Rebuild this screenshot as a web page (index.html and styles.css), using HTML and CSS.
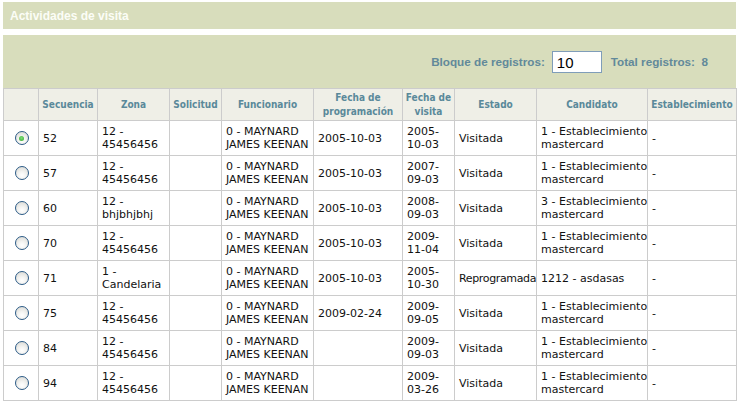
FILE: index.html
```html
<!DOCTYPE html>
<html>
<head>
<meta charset="utf-8">
<link rel="stylesheet" href="styles.css">
</head>
<body>
<div class="page">
  <div class="titlebar">Actividades de visita</div>
  <div class="toolbar">
    <label class="lbl">Bloque de registros:</label>
    <input class="block-input" type="text" value="10">
    <span class="lbl total">Total registros:&nbsp; 8</span>
  </div>
  <table class="grid">
    <colgroup>
      <col style="width:35px"><col style="width:59px"><col style="width:72px"><col style="width:52px"><col style="width:92px"><col style="width:89px"><col style="width:52px"><col style="width:82px"><col style="width:111px"><col style="width:89px">
    </colgroup>
    <thead>
      <tr>
        <th></th><th>Secuencia</th><th>Zona</th><th>Solicitud</th><th>Funcionario</th><th>Fecha de<br>programación</th><th>Fecha de<br>visita</th><th>Estado</th><th>Candidato</th><th>Establecimiento</th>
      </tr>
    </thead>
    <tbody>
      <tr><td class="sel"><span class="radio on"></span></td><td>52</td><td>12 -<br>45456456</td><td></td><td>0 - MAYNARD<br>JAMES KEENAN</td><td>2005-10-03</td><td>2005-<br>10-03</td><td>Visitada</td><td>1 - Establecimiento<br>mastercard</td><td>-</td></tr>
      <tr><td class="sel"><span class="radio"></span></td><td>57</td><td>12 -<br>45456456</td><td></td><td>0 - MAYNARD<br>JAMES KEENAN</td><td>2005-10-03</td><td>2007-<br>09-03</td><td>Visitada</td><td>1 - Establecimiento<br>mastercard</td><td>-</td></tr>
      <tr><td class="sel"><span class="radio"></span></td><td>60</td><td>12 -<br>bhjbhjbhj</td><td></td><td>0 - MAYNARD<br>JAMES KEENAN</td><td>2005-10-03</td><td>2008-<br>09-03</td><td>Visitada</td><td>3 - Establecimiento<br>mastercard</td><td>-</td></tr>
      <tr><td class="sel"><span class="radio"></span></td><td>70</td><td>12 -<br>45456456</td><td></td><td>0 - MAYNARD<br>JAMES KEENAN</td><td>2005-10-03</td><td>2009-<br>11-04</td><td>Visitada</td><td>1 - Establecimiento<br>mastercard</td><td>-</td></tr>
      <tr><td class="sel"><span class="radio"></span></td><td>71</td><td>1 -<br>Candelaria</td><td></td><td>0 - MAYNARD<br>JAMES KEENAN</td><td>2005-10-03</td><td>2005-<br>10-30</td><td class="tight">Reprogramada</td><td>1212 - asdasas</td><td>-</td></tr>
      <tr><td class="sel"><span class="radio"></span></td><td>75</td><td>12 -<br>45456456</td><td></td><td>0 - MAYNARD<br>JAMES KEENAN</td><td>2009-02-24</td><td>2009-<br>09-05</td><td>Visitada</td><td>1 - Establecimiento<br>mastercard</td><td>-</td></tr>
      <tr><td class="sel"><span class="radio"></span></td><td>84</td><td>12 -<br>45456456</td><td></td><td>0 - MAYNARD<br>JAMES KEENAN</td><td></td><td>2009-<br>09-03</td><td>Visitada</td><td>1 - Establecimiento<br>mastercard</td><td>-</td></tr>
      <tr><td class="sel"><span class="radio"></span></td><td>94</td><td>12 -<br>45456456</td><td></td><td>0 - MAYNARD<br>JAMES KEENAN</td><td></td><td>2009-<br>03-26</td><td>Visitada</td><td>1 - Establecimiento<br>mastercard</td><td>-</td></tr>
    </tbody>
  </table>
</div>
</body>
</html>
```

FILE: styles.css
```css
html, body {
  margin: 0;
  padding: 0;
  background: #ffffff;
}
.page {
  padding: 2px 0 0 3px;
  width: 733px;
}
.titlebar {
  height: 27px;
  background: #d8ddbc;
  color: #fcfdf7;
  font-family: "Liberation Sans", Arial, sans-serif;
  font-weight: bold;
  font-size: 12px;
  line-height: 28px;
  padding-left: 7px;
}
.toolbar {
  margin-top: 6px;
  height: 53px;
  background: #d8ddbc;
  display: flex;
  align-items: center;
  justify-content: flex-end;
  padding-right: 28px;
  font-family: "Liberation Sans", Arial, sans-serif;
  font-weight: bold;
  font-size: 11.7px;
  color: #62899a;
}
.block-input {
  box-sizing: border-box;
  width: 50px;
  height: 22px;
  margin: 0 0 0 7px;
  border: 1px solid #7f9db9;
  padding: 1px 4px 0;
  font-family: "Liberation Sans", Arial, sans-serif;
  font-size: 15px;
  color: #000;
  background: #fff;
  outline: none;
}
.total {
  margin-left: 9px;
}
.grid {
  border-collapse: collapse;
  table-layout: fixed;
  width: 733px;
  font-family: "DejaVu Sans", Verdana, sans-serif;
  font-size: 11px;
  color: #111;
}
.grid th, .grid td {
  border: 1px solid #cccccc;
}
.grid th {
  background: #efefe7;
  color: #5a899a;
  font-family: "DejaVu Sans Condensed", "DejaVu Sans", Tahoma, sans-serif;
  font-weight: bold;
  font-size: 10px;
  line-height: 14px;
  height: 31px;
  padding: 0 1px;
  text-align: center;
  vertical-align: middle;
  white-space: nowrap;
}
.grid td {
  height: 34px;
  line-height: 13px;
  padding: 0 1px 0 4px;
  vertical-align: middle;
  text-align: left;
  white-space: nowrap;
  overflow: hidden;
}
.grid td.tight {
  letter-spacing: -0.35px;
}
.grid td.sel {
  text-align: center;
  padding: 0;
}
.radio {
  display: inline-block;
  box-sizing: border-box;
  width: 14px;
  height: 14px;
  border-radius: 50%;
  border: 1px solid #2c5b87;
  background: radial-gradient(circle at 50% 70%, #ffffff 0%, #f4f4f2 35%, #d6d6d0 100%);
  vertical-align: middle;
  position: relative;
  margin-left: 1px;
}
.radio.on::after {
  content: "";
  position: absolute;
  left: 3.5px;
  top: 3.5px;
  width: 5px;
  height: 5px;
  border-radius: 50%;
  background: radial-gradient(circle at 50% 40%, #7fe07a 0%, #2fa52a 100%);
}
```
